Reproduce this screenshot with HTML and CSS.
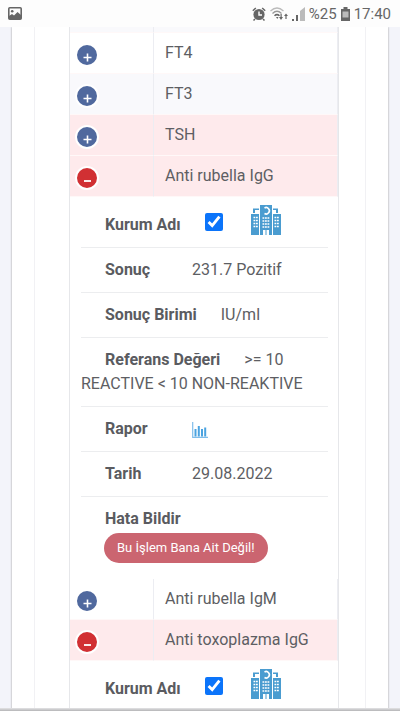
FILE: index.html
```html
<!DOCTYPE html>
<html lang="tr">
<head>
<meta charset="utf-8">
<meta name="viewport" content="width=device-width, initial-scale=1">
<title>Tahliller</title>
<link rel="stylesheet" href="styles.css">
</head>
<body>
<svg class="defs" aria-hidden="true">
  <symbol id="plus" viewBox="0 0 20 20"><path d="M10.500 8.500v8M6.500 12.500h8" stroke="#fff" stroke-width="1.600"/></symbol>
  <symbol id="minus" viewBox="0 0 20 20"><path d="M7 13h7" stroke="#fff" stroke-width="1.800"/></symbol>
  <symbol id="hospital" viewBox="0 0 30 30">
    <path fill="#4a9cd0" d="M9 0h12v30h-3v-5h-2.500v5h-1v-5H12v5H9zM0 9h8v21H0zM22 9h8v21h-8zM2 3.500h6V5H4v3H2zM22 3.500h5V8h-2V5h-3z"/>
    <path fill="none" stroke="#fff" stroke-width="1.600" d="M13.500 3a3.200 3.200 0 1 1 0 5.500"/>
    <path stroke="#fff" stroke-width="1.600" stroke-dasharray="1.800 .7" d="M11.500 13h7.500M11.500 16h7.500M11.500 19h7.500M11.500 22h7.500M2.500 12.500h5M2.500 15.500h5M2.500 18.500h5M2.500 21.500h5M23.500 12.500h5M23.500 15.500h5M23.500 18.500h5M23.500 21.500h5"/>
  </symbol>
</svg>
<header class="status">
  <svg class="photo" width="14" height="13" viewBox="0 0 14 13"><rect x=".8" y=".8" width="12.400" height="11.400" rx="1" fill="none" stroke="#666" stroke-width="1.600"/><circle cx="4.200" cy="4.300" r="1.300" fill="#666"/><path d="M1 9l3-2 2 1.500L9.500 5 13 8v4H1z" fill="#666"/></svg>
  <svg width="14" height="14" viewBox="0 0 14 14"><circle cx="7" cy="7.500" r="5.600" fill="#666"/><path d="M.8 3.800L3.800 1M13.200 3.800L10.200 1M3 12l-1.500 1.500M11 12l1.500 1.500" stroke="#666" stroke-width="1.500"/><path d="M7 4.500v3.500h3" fill="none" stroke="#fff" stroke-width="1.400"/></svg>
  <svg width="18" height="14" viewBox="0 0 18 14"><g fill="none" stroke-width="1.200"><path d="M.5 4Q7-2 13.500 4" stroke="#bbb"/><path d="M2.500 6.500Q7 2 11.500 6.500" stroke="#999"/><path d="M4.500 8.800Q7 6.500 9.500 8.800" stroke="#666" stroke-width="1.500"/></g><path d="M6 10h2.500L7.300 12zM9 10h1.500V7h1.200v3H13L11 13zM14 9l2-2.500L18 9h-1.400v3h-1.200V9z" fill="#666"/></svg>
  <svg width="13" height="14" viewBox="0 0 13 14"><path d="M0 12h2v2H0zM4 8h2v6H4z" fill="#666"/><path d="M8 4l5-4v14H8z" fill="#bbb"/></svg>
  <span>%25</span>
  <svg width="9" height="14" viewBox="0 0 9 14"><path d="M2.500 0h4v2H9v12H0V2h2.500z" fill="#666"/><path d="M1.500 4.500h6v6h-6z" fill="#bbb"/></svg>
  <time>17:40</time>
</header>
<main class="page">
  <section class="card">
    <div class="panel">
      <table class="results">
        <colgroup><col class="toggle-col"><col></colgroup>
        <tbody>
          <tr class="spacer alt"><td></td><td></td></tr>
          <tr><td><button class="toggle" aria-label="Aç"><svg><use href="#plus"/></svg></button></td><td>FT4</td></tr>
          <tr class="alt"><td><button class="toggle" aria-label="Aç"><svg><use href="#plus"/></svg></button></td><td>FT3</td></tr>
          <tr class="flag"><td><button class="toggle" aria-label="Aç"><svg><use href="#plus"/></svg></button></td><td>TSH</td></tr>
          <tr class="flag"><td><button class="toggle open" aria-label="Kapat"><svg><use href="#minus"/></svg></button></td><td>Anti rubella IgG</td></tr>
          <tr class="detail"><td colspan="2">
            <ul>
              <li class="org"><label for="org1">Kurum Adı</label><input type="checkbox" id="org1" checked><svg class="hospital"><use href="#hospital"/></svg></li>
              <li><b>Sonuç</b>231.7 Pozitif</li>
              <li><b>Sonuç Birimi</b>IU/ml</li>
              <li><b>Referans Değeri</b><span>&gt;= 10</span> <span>REACTIVE &lt; 10 NON-REAKTIVE</span></li>
              <li><b>Rapor</b><a href="#rapor" aria-label="Rapor"><svg class="chart" viewBox="0 0 16 16"><path d="M.7 0v15.300H16" fill="none" stroke="#7fbdea" stroke-width="1.200"/><path d="M2.500 7h2v7.500h-2zM5.800 4h2v10.500h-2zM9 7h2v7.500H9zM12.200 5.500h2v9h-2z" fill="#4ba3e0"/></svg></a></li>
              <li><b>Tarih</b>29.08.2022</li>
              <li class="report"><b>Hata Bildir</b><button class="pill">Bu İşlem Bana Ait Değil!</button></li>
            </ul>
          </td></tr>
          <tr><td><button class="toggle" aria-label="Aç"><svg><use href="#plus"/></svg></button></td><td>Anti rubella IgM</td></tr>
          <tr class="flag"><td><button class="toggle open" aria-label="Kapat"><svg><use href="#minus"/></svg></button></td><td>Anti toxoplazma IgG</td></tr>
          <tr class="detail"><td colspan="2">
            <ul>
              <li class="org"><label for="org2">Kurum Adı</label><input type="checkbox" id="org2" checked><svg class="hospital"><use href="#hospital"/></svg></li>
            </ul>
          </td></tr>
        </tbody>
      </table>
    </div>
  </section>
</main>
</body>
</html>
```
FILE: styles.css
```css
* { box-sizing: border-box; }
body {
  margin: 0;
  height: 100vh;
  overflow: hidden;
  display: flex;
  flex-direction: column;
  font: 16px/24px Roboto, sans-serif;
  color: #5d5e63;
  background: #f3f4fa;
}
body::after {
  content: "";
  position: fixed;
  inset: auto 0 0;
  height: 3px;
  background: linear-gradient(#e4e4e6, #b4b4b6);
}
.defs { position: absolute; width: 0; height: 0; }
.status {
  flex: none;
  height: 27px;
  padding: 0 9px 0 8px;
  display: flex;
  align-items: center;
  gap: 4px;
  background: #fdfdfd;
  color: #666;
  font-size: 15px;
  white-space: nowrap;
}
.status svg { flex: none; }
.status .photo { margin-right: auto; }
.page {
  flex: 1;
  min-height: 0;
  overflow: hidden;
  padding: 0 12px;
}
.card {
  min-height: 100%;
  padding: 0 22px;
  background: #fff;
  box-shadow: 0 0 2px #999;
}
.panel {
  padding: 0 26px 0 34px;
  border: solid #f1f1f4;
  border-width: 0 1px;
}
.results {
  width: 100%;
  table-layout: fixed;
  border-collapse: separate;
  border-spacing: 0;
  border: solid #e6e7ea;
  border-width: 0 1px;
}
.toggle-col { width: 84px; }
.results td {
  height: 41px;
  padding: 0 11px;
  vertical-align: middle;
  border-right: 1px solid #ecedf2;
  border-bottom: 1px solid #fff8f8;
}
.results td:first-child { padding: 4px 5px 0; }
.results .spacer td { height: 6px; padding: 0; }
.alt td { background: #f9f9fc; }
.flag td { background: #feeaec; }
.results .detail td {
  height: auto;
  padding: 3px 10px 0 11px;
  border: 0;
}
.toggle {
  display: block;
  width: 24px;
  height: 24px;
  padding: 0;
  border: 2px solid #fff;
  border-radius: 50%;
  background: #50699e;
}
.toggle.open { background: #d13033; }
.toggle svg { display: block; width: 20px; height: 20px; }
ul { margin: 0; padding: 0; list-style: none; }
li { padding: 10px 0; border-bottom: 1px solid #ecedef; }
li:last-child { border-bottom: 0; }
b, label {
  display: inline-block;
  min-width: 87px;
  margin-right: 24px;
  padding-left: 24px;
  font-weight: 700;
  color: #5a5b60;
}
.org {
  display: flex;
  align-items: flex-start;
  height: 48px;
  padding: 5px 0;
}
.org label { padding-top: 8px; }
.org input {
  width: 18px;
  height: 18px;
  margin: 8px 28px 0 0;
  accent-color: #0b74fa;
}
.hospital { width: 30px; height: 30px; }
.chart { width: 16px; height: 16px; vertical-align: middle; }
.report b { display: block; margin: 0; }
.pill {
  display: block;
  height: 30px;
  margin: 2px 0 6px 23px;
  padding: 0 13px;
  border: 0;
  border-radius: 15px;
  background: #cb6570;
  color: #fff;
  font: 13px/30px Roboto, sans-serif;
}
```
